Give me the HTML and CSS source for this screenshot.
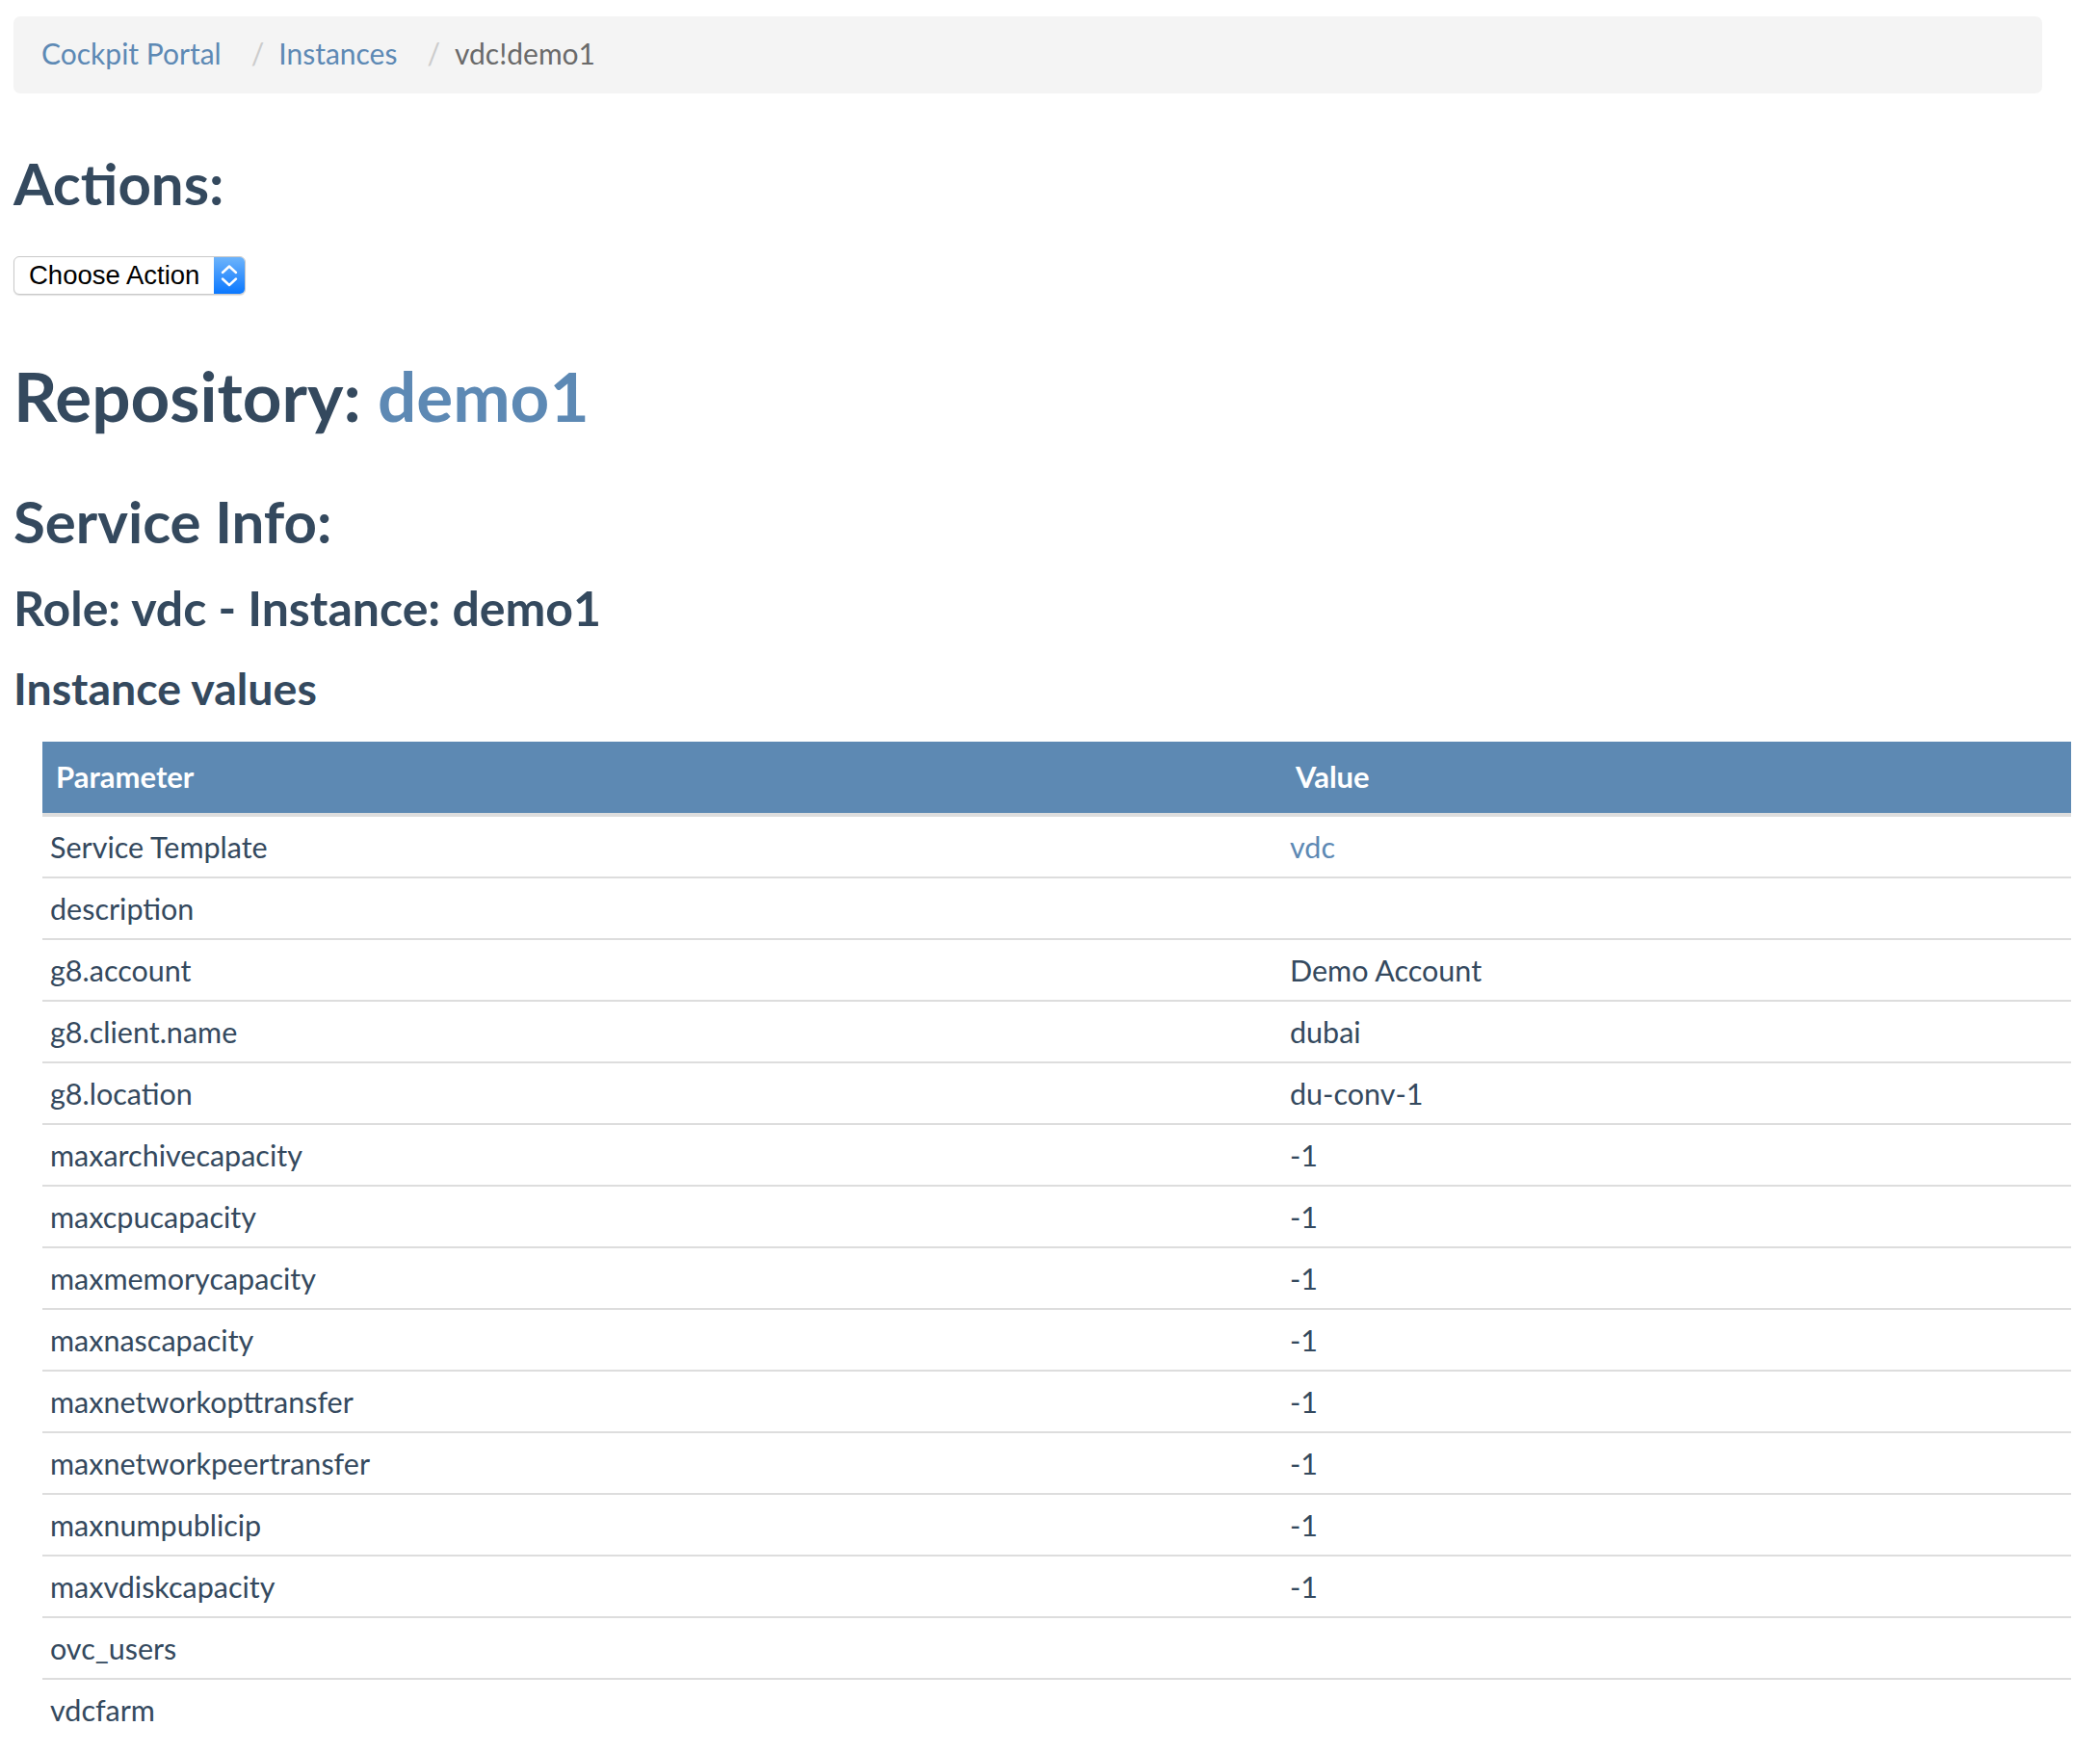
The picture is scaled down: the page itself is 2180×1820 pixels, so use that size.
FILE: index.html
```html
<!DOCTYPE html>
<html lang="en">
<head>
<meta charset="utf-8">
<title>vdc!demo1 - Cockpit Portal</title>
<link rel="stylesheet" href="styles.css">
</head>
<body>
<div class="page">
  <nav class="breadcrumb">
    <a class="crumb-link" href="#">Cockpit Portal</a><span class="sep">/</span><a class="crumb-link" href="#">Instances</a><span class="sep">/</span><span class="crumb-current">vdc!demo1</span>
  </nav>

  <h2 class="h2 actions-title">Actions:</h2>
  <div class="select" role="listbox" aria-label="Choose Action">
    <span class="select-label">Choose Action</span>
    <span class="select-arrows">
      <svg width="32" height="38" viewBox="0 0 32 38" aria-hidden="true">
        <path d="M9 16 L16 9.5 L23 16" fill="none" stroke="#fff" stroke-width="2.4" stroke-linecap="round" stroke-linejoin="round"/>
        <path d="M9 22.5 L16 29 L23 22.5" fill="none" stroke="#fff" stroke-width="2.4" stroke-linecap="round" stroke-linejoin="round"/>
      </svg>
    </span>
  </div>

  <h1 class="h1 repo-title">Repository: <a class="repo-link" href="#">demo1</a></h1>
  <h2 class="h2 service-title">Service Info:</h2>
  <h3 class="h3 role-title">Role: vdc - Instance: demo1</h3>
  <h3 class="h3 values-title">Instance values</h3>

  <table class="values-table">
    <thead>
      <tr><th class="col-param">Parameter</th><th class="col-value">Value</th></tr>
    </thead>
    <tbody>
      <tr><td>Service Template</td><td><a class="cell-link" href="#">vdc</a></td></tr>
      <tr><td>description</td><td></td></tr>
      <tr><td>g8.account</td><td>Demo Account</td></tr>
      <tr><td>g8.client.name</td><td>dubai</td></tr>
      <tr><td>g8.location</td><td>du-conv-1</td></tr>
      <tr><td>maxarchivecapacity</td><td>-1</td></tr>
      <tr><td>maxcpucapacity</td><td>-1</td></tr>
      <tr><td>maxmemorycapacity</td><td>-1</td></tr>
      <tr><td>maxnascapacity</td><td>-1</td></tr>
      <tr><td>maxnetworkopttransfer</td><td>-1</td></tr>
      <tr><td>maxnetworkpeertransfer</td><td>-1</td></tr>
      <tr><td>maxnumpublicip</td><td>-1</td></tr>
      <tr><td>maxvdiskcapacity</td><td>-1</td></tr>
      <tr><td>ovc_users</td><td></td></tr>
      <tr><td>vdcfarm</td><td></td></tr>
    </tbody>
  </table>
</div>
</body>
</html>
```

FILE: styles.css
```css
html, body {
  margin: 0;
  padding: 0;
  background: #ffffff;
}

body {
  font-family: Lato, "Open Sans", "Liberation Sans", sans-serif;
  color: #34495e;
}

.page {
  width: 2106px;
  padding: 17px 0 40px 14px;
}

a {
  color: #5d89b4;
  text-decoration: none;
}

/* Breadcrumb */
.breadcrumb {
  background: #f4f4f4;
  border-radius: 7px;
  height: 80px;
  box-sizing: border-box;
  padding: 0 29px 3px;
  line-height: 77px;
  font-size: 30px;
  white-space: nowrap;
}

.crumb-link {
  color: #5d89b4;
}

.sep {
  color: #cccccc;
  margin: 0 15px 0 31px;
}

.crumb-current {
  color: #6a6a6a;
}

/* Headings */
.h1, .h2, .h3 {
  font-weight: 700;
  color: #34495e;
  margin: 0;
}

.h1 {
  font-size: 71px;
  line-height: 80px;
}

.h2 {
  font-size: 60px;
  line-height: 66px;
}

.h3 {
  font-size: 48px;
  line-height: 53px;
}

.actions-title {
  margin-top: 60px;
}

.repo-title {
  margin-top: 65px;
}

.repo-link {
  color: #5d89b4;
}

.service-title {
  margin-top: 57px;
}

.role-title {
  margin-top: 31px;
  font-size: 50px;
}

.values-title {
  margin-top: 30px;
  font-size: 46.5px;
}

/* Select */
.select {
  margin-top: 43px;
  width: 241px;
  height: 40px;
  box-sizing: border-box;
  display: flex;
  align-items: stretch;
  border: 1px solid #c9c9c9;
  border-radius: 6px;
  background: #ffffff;
  box-shadow: 0 1px 1px rgba(0, 0, 0, 0.12);
  overflow: hidden;
}

.select-label {
  flex: 1;
  padding-left: 15px;
  font-family: "Liberation Sans", Arial, sans-serif;
  font-size: 27.5px;
  line-height: 38px;
  color: #000000;
  white-space: nowrap;
}

.select-arrows {
  width: 32px;
  display: flex;
  align-items: center;
  justify-content: center;
  background: linear-gradient(to bottom, #6db4fb 0%, #3c95fd 50%, #0a78ff 100%);
}

/* Table */
.values-table {
  margin-top: 29px;
  margin-left: 30px;
  width: 2106px;
  border-collapse: separate;
  border-spacing: 0;
  table-layout: fixed;
  font-size: 30.5px;
}

.col-param {
  width: 1287px;
}

.values-table th {
  background: #5d89b3;
  color: #ffffff;
  font-size: 31px;
  font-weight: 700;
  text-align: left;
  height: 74px;
  box-sizing: border-box;
  padding: 0 0 2px 14px;
  line-height: 72px;
  border-bottom: 4px solid #dddddd;
}

.values-table td {
  padding: 0 0 0 8px;
  height: 62px;
  line-height: 62px;
  color: #34495e;
  white-space: nowrap;
  border-top: 2px solid #dddddd;
}

.values-table tbody tr:first-child td {
  border-top: 0;
}

.cell-link {
  color: #5d89b4;
}
```
